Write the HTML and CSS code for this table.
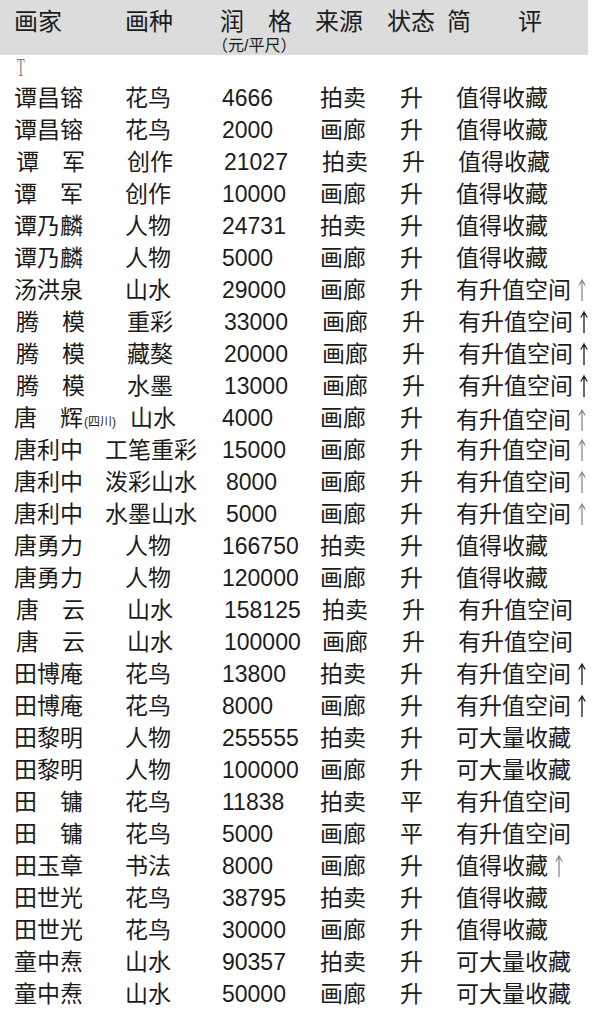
FILE: index.html
```html
<!DOCTYPE html>
<html lang="zh">
<head>
<meta charset="utf-8">
<title>画家润格</title>
<link rel="stylesheet" href="styles.css">
</head>
<body>
<div class="page">
  <div class="head">
    <div class="h-name">画家</div>
    <div class="h-type">画种</div>
    <div class="h-price">
      <div class="h-price-main">润　格</div>
      <div class="h-price-sub">（元/平尺）</div>
    </div>
    <div class="h-src">来源</div>
    <div class="h-state">状态</div>
    <div class="h-note"><span>简</span><span class="h-note-2">评</span></div>
  </div>
  <div class="mark"><span class="mark-t">T</span></div>
  <div class="rows">
    <div class="row"><span>谭昌镕</span><span>花鸟</span><span>4666</span><span>拍卖</span><span>升</span><span>值得收藏</span></div>
    <div class="row"><span>谭昌镕</span><span>花鸟</span><span>2000</span><span>画廊</span><span>升</span><span>值得收藏</span></div>
    <div class="row shift"><span>谭　军</span><span>创作</span><span>21027</span><span>拍卖</span><span>升</span><span>值得收藏</span></div>
    <div class="row"><span>谭　军</span><span>创作</span><span>10000</span><span>画廊</span><span>升</span><span>值得收藏</span></div>
    <div class="row"><span>谭乃麟</span><span>人物</span><span>24731</span><span>拍卖</span><span>升</span><span>值得收藏</span></div>
    <div class="row"><span>谭乃麟</span><span>人物</span><span>5000</span><span>画廊</span><span>升</span><span>值得收藏</span></div>
    <div class="row"><span>汤洪泉</span><span>山水</span><span>29000</span><span>画廊</span><span>升</span><span class="note">有升值空间<svg class="arrow gray" viewBox="0 0 10 24" width="10" height="24"><path d="M5 23V2M1.8 7.5L5 2l3.2 5.5"/></svg></span></div>
    <div class="row shift"><span>腾　模</span><span>重彩</span><span>33000</span><span>画廊</span><span>升</span><span class="note">有升值空间<svg class="arrow" viewBox="0 0 10 24" width="10" height="24"><path d="M5 23V2M1.8 7.5L5 2l3.2 5.5"/></svg></span></div>
    <div class="row shift"><span>腾　模</span><span>藏獒</span><span>20000</span><span>画廊</span><span>升</span><span class="note">有升值空间<svg class="arrow" viewBox="0 0 10 24" width="10" height="24"><path d="M5 23V2M1.8 7.5L5 2l3.2 5.5"/></svg></span></div>
    <div class="row shift"><span>腾　模</span><span>水墨</span><span>13000</span><span>画廊</span><span>升</span><span class="note">有升值空间<svg class="arrow" viewBox="0 0 10 24" width="10" height="24"><path d="M5 23V2M1.8 7.5L5 2l3.2 5.5"/></svg></span></div>
    <div class="row"><span class="name-x">唐　辉<small>(四川)</small></span><span class="pushed">山水</span><span>4000</span><span>画廊</span><span>升</span><span class="note">有升值空间<svg class="arrow gray" viewBox="0 0 10 24" width="10" height="24"><path d="M5 23V2M1.8 7.5L5 2l3.2 5.5"/></svg></span></div>
    <div class="row"><span>唐利中</span><span class="wide">工笔重彩</span><span>15000</span><span>画廊</span><span>升</span><span class="note">有升值空间<svg class="arrow gray" viewBox="0 0 10 24" width="10" height="24"><path d="M5 23V2M1.8 7.5L5 2l3.2 5.5"/></svg></span></div>
    <div class="row"><span>唐利中</span><span class="wide">泼彩山水</span><span class="num-in">8000</span><span>画廊</span><span>升</span><span class="note">有升值空间<svg class="arrow gray" viewBox="0 0 10 24" width="10" height="24"><path d="M5 23V2M1.8 7.5L5 2l3.2 5.5"/></svg></span></div>
    <div class="row"><span>唐利中</span><span class="wide">水墨山水</span><span class="num-in">5000</span><span>画廊</span><span>升</span><span class="note">有升值空间<svg class="arrow gray" viewBox="0 0 10 24" width="10" height="24"><path d="M5 23V2M1.8 7.5L5 2l3.2 5.5"/></svg></span></div>
    <div class="row"><span>唐勇力</span><span>人物</span><span>166750</span><span>拍卖</span><span>升</span><span>值得收藏</span></div>
    <div class="row"><span>唐勇力</span><span>人物</span><span>120000</span><span>画廊</span><span>升</span><span>值得收藏</span></div>
    <div class="row shift"><span>唐　云</span><span>山水</span><span>158125</span><span>拍卖</span><span>升</span><span>有升值空间</span></div>
    <div class="row shift"><span>唐　云</span><span>山水</span><span>100000</span><span>画廊</span><span>升</span><span>有升值空间</span></div>
    <div class="row"><span>田博庵</span><span>花鸟</span><span>13800</span><span>拍卖</span><span>升</span><span class="note">有升值空间<svg class="arrow" viewBox="0 0 10 24" width="10" height="24"><path d="M5 23V2M1.8 7.5L5 2l3.2 5.5"/></svg></span></div>
    <div class="row"><span>田博庵</span><span>花鸟</span><span>8000</span><span>画廊</span><span>升</span><span class="note">有升值空间<svg class="arrow" viewBox="0 0 10 24" width="10" height="24"><path d="M5 23V2M1.8 7.5L5 2l3.2 5.5"/></svg></span></div>
    <div class="row"><span>田黎明</span><span>人物</span><span>255555</span><span>拍卖</span><span>升</span><span>可大量收藏</span></div>
    <div class="row"><span>田黎明</span><span>人物</span><span>100000</span><span>画廊</span><span>升</span><span>可大量收藏</span></div>
    <div class="row"><span>田　镛</span><span>花鸟</span><span>11838</span><span>拍卖</span><span>平</span><span>有升值空间</span></div>
    <div class="row"><span>田　镛</span><span>花鸟</span><span>5000</span><span>画廊</span><span>平</span><span>有升值空间</span></div>
    <div class="row"><span>田玉章</span><span>书法</span><span>8000</span><span>画廊</span><span>升</span><span class="note">值得收藏<svg class="arrow gray" viewBox="0 0 10 24" width="10" height="24"><path d="M5 23V2M1.8 7.5L5 2l3.2 5.5"/></svg></span></div>
    <div class="row"><span>田世光</span><span>花鸟</span><span>38795</span><span>拍卖</span><span>升</span><span>值得收藏</span></div>
    <div class="row"><span>田世光</span><span>花鸟</span><span>30000</span><span>画廊</span><span>升</span><span>值得收藏</span></div>
    <div class="row"><span>童中焘</span><span>山水</span><span>90357</span><span>拍卖</span><span>升</span><span>可大量收藏</span></div>
    <div class="row"><span>童中焘</span><span>山水</span><span>50000</span><span>画廊</span><span>升</span><span>可大量收藏</span></div>
  </div>
</div>
</body>
</html>
```

FILE: styles.css
```css
html, body {
  margin: 0;
  padding: 0;
  background: #ffffff;
}

.page {
  width: 600px;
  font-family: "Liberation Sans", "Noto Sans CJK SC", sans-serif;
  color: #1c1c1c;
}

.head {
  width: 588px;
  height: 55px;
  box-sizing: border-box;
  background: #dcdcdc;
  display: flex;
  align-items: flex-start;
  padding: 8px 0 0 14px;
  font-size: 24px;
  line-height: 28px;
}

.h-name { width: 111px; }
.h-type { width: 95px; }
.h-price { width: 95px; display: flex; flex-direction: column; }
.h-price-main { white-space: nowrap; }
.h-price-sub {
  font-size: 16px;
  line-height: 17px;
  margin-top: 1px;
  margin-left: -8px;
  white-space: nowrap;
}
.h-src { width: 72px; }
.h-state { width: 60px; }
.h-note { display: flex; }
.h-note-2 { margin-left: 47px; }

.mark {
  height: 27px;
  padding-left: 17px;
  box-sizing: border-box;
  line-height: 26px;
}
.mark-t {
  display: inline-block;
  font-family: "Liberation Serif", serif;
  font-size: 25px;
  color: #7c7c7c;
  transform: scale(0.5, 1);
  transform-origin: left center;
}

.rows {
  font-size: 23px;
}

.row {
  display: grid;
  grid-template-columns: 111px 97px 98px 80px 56px 1fr;
  height: 32px;
  line-height: 32px;
  padding-left: 14px;
  white-space: nowrap;
}

.row.shift { padding-left: 16px; }

.wide { margin-left: -20px; }
.pushed { padding-left: 5px; }
.num-in { padding-left: 4px; }

.name-x small {
  font-size: 12px;
  margin-left: 1px;
}

.note {
  display: flex;
  align-items: center;
}

.arrow {
  margin-left: 6px;
  fill: none;
  stroke: #1a1a1a;
  stroke-width: 1.3;
  flex: none;
}
.arrow.gray { stroke: #8c8c8c; }
```
